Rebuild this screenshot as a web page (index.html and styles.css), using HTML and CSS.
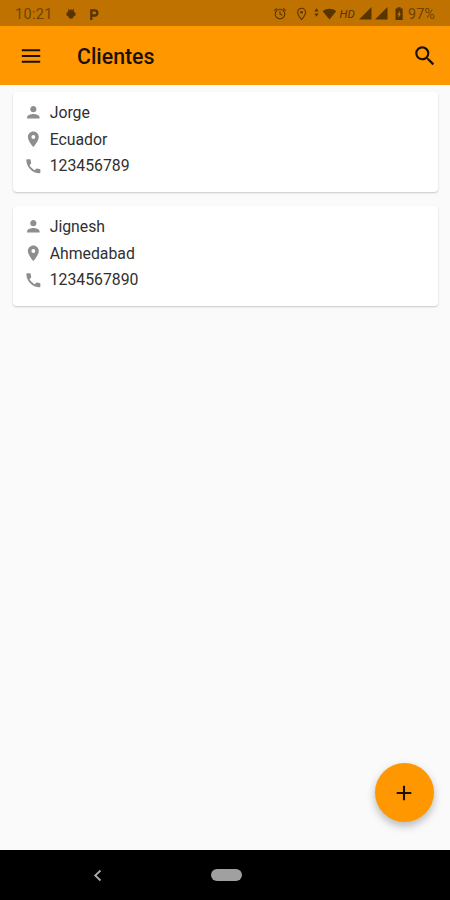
FILE: index.html
```html
<!DOCTYPE html>
<html lang="es">
<head>
<meta charset="utf-8">
<title>Clientes</title>
<link rel="stylesheet" href="styles.css">
</head>
<body>
<svg class="defs" aria-hidden="true">
  <symbol id="person" viewBox="0 0 24 24"><path d="M12 12c2.21 0 4-1.79 4-4s-1.79-4-4-4-4 1.79-4 4 1.79 4 4 4zm0 2c-2.67 0-8 1.34-8 4v2h16v-2c0-2.66-5.33-4-8-4z"/></symbol>
  <symbol id="place" viewBox="0 0 24 24"><path d="M12 2C8.13 2 5 5.13 5 9c0 5.25 7 13 7 13s7-7.75 7-13c0-3.87-3.13-7-7-7zm0 9.5a2.5 2.5 0 0 1 0-5 2.5 2.5 0 0 1 0 5z"/></symbol>
  <symbol id="phone" viewBox="0 0 24 24"><path d="M20.01 15.38c-1.23 0-2.42-.2-3.53-.56a.977.977 0 0 0-1.01.24l-1.57 1.97c-2.83-1.35-5.48-3.9-6.89-6.83l1.95-1.66c.27-.28.35-.67.24-1.02-.37-1.11-.56-2.3-.56-3.53 0-.54-.45-.99-.99-.99H4.19C3.65 3 3 3.24 3 3.99 3 13.28 10.73 21 20.01 21c.71 0 .99-.63.99-1.18v-3.45c0-.54-.45-.99-.99-.99z"/></symbol>
</svg>
<header>
  <div class="status">
    <span class="clock">10:21</span>
    <svg class="bug" width="10" height="12" viewBox="0 0 10 12"><path d="M2.300 .8l1.100 1.200a3.400 3.400 0 0 1 3.200 0L7.700 .8l.5.4-.8 1.500c.6.500.9 1.100 1 1.700h1.100v3.300H8.100A3.600 3.600 0 0 1 5 10.800 3.600 3.600 0 0 1 1.900 7.700H.5V4.400h1.100c.1-.6.400-1.200 1-1.700l-.8-1.500z"/></svg>
    <svg class="parking" width="11" height="13" viewBox="0 0 11 13"><path d="M2.300 12V2.400h3.500a2.500 2.500 0 0 1 0 5.100H2.300" fill="none" stroke="currentColor" stroke-width="2.300"/></svg>
    <svg class="icons" width="134" height="16" viewBox="0 0 134 16">
      <g fill="none" stroke="currentColor" stroke-width="1.1">
        <circle cx="7" cy="8" r="4.8"/><path d="M1.2 4.6l2.7-2.3M10.1 2.3l2.7 2.3M7 5.2V8l2.3 1.3"/>
        <path d="M28.6 13.4s-3.9-4.1-3.9-7.2a3.9 3.9 0 0 1 7.8 0c0 3.1-3.9 7.2-3.9 7.2z"/>
      </g>
      <circle cx="28.6" cy="6.3" r="1.3"/>
      <path d="M41.3 5.500l2.200-3.300 2.200 3.300zM41.300 7.500l2.200 3.300 2.200-3.300z"/>
      <path d="M49.700 5.200c4-3.200 9.500-3.200 13.500 0l-6.700 8.200z"/>
      <text x="66.500" y="11.500" class="hd">HD</text>
      <path d="M86 13.500L98.500 1v12.500zM102 13.500L114.500 1v12.500z"/>
      <path fill-rule="evenodd" d="M122.500 2.500h2V1.200h3.200v1.300h2v11.500h-7.200zm4.300 2.300l-2.600 4h1.300v3l2.500-4h-1.200z"/>
    </svg>
    <span class="battery">97%</span>
  </div>
  <div class="appbar">
    <svg class="menu" width="20" height="16" viewBox="0 0 20 16"><path d="M.8 2.200h18.400M.8 8h18.400M.8 13.800h18.400" fill="none" stroke="currentColor" stroke-width="2"/></svg>
    <h1>Clientes</h1>
    <svg class="search" width="26" height="26" viewBox="0 0 24 24"><path d="M15.500 14h-.79l-.28-.27A6.471 6.471 0 0 0 16 9.500 6.500 6.500 0 1 0 9.500 16c1.610 0 3.090-.590 4.230-1.570l.27.28v.79l5 4.990L20.490 19l-4.990-5zm-6 0C7.010 14 5 11.990 5 9.500S7.010 5 9.500 5 14 7.010 14 9.500 11.990 14 9.500 14z"/></svg>
  </div>
</header>
<main>
  <article class="card">
    <div class="row"><svg><use href="#person"/></svg><span>Jorge</span></div>
    <div class="row"><svg><use href="#place"/></svg><span>Ecuador</span></div>
    <div class="row"><svg><use href="#phone"/></svg><span>123456789</span></div>
  </article>
  <article class="card">
    <div class="row"><svg><use href="#person"/></svg><span>Jignesh</span></div>
    <div class="row"><svg><use href="#place"/></svg><span>Ahmedabad</span></div>
    <div class="row"><svg><use href="#phone"/></svg><span>1234567890</span></div>
  </article>
  <button class="fab" aria-label="Agregar"><svg width="16" height="16" viewBox="0 0 16 16"><path d="M8 .7v14.6M.7 8h14.6" fill="none" stroke="currentColor" stroke-width="2.1"/></svg></button>
</main>
<footer>
  <svg class="back" width="9" height="13" viewBox="0 0 9 13"><path d="M7.500 1.500l-5.300 5 5.300 5" fill="none" stroke="currentColor" stroke-width="1.800"/></svg>
  <span class="home"></span>
</footer>
</body>
</html>
```
FILE: styles.css
```css
* { box-sizing: border-box; }
body {
  margin: 0;
  height: 900px;
  display: flex;
  flex-direction: column;
  overflow: hidden;
  background: #fafafa;
  color: #303030;
  font-family: Roboto, sans-serif;
}
svg { display: block; flex: none; fill: currentColor; }
.defs { position: absolute; width: 0; height: 0; }
.status {
  height: 26px;
  display: flex;
  align-items: center;
  padding: 2px 13px 0 15px;
  background: #bf7200;
  color: #573400;
  font-size: 14.5px;
}
.clock { width: 51px; letter-spacing: .3px; color: #704300; }
.parking { margin-left: 13px; }
.icons { margin-left: auto; }
.hd { font-size: 11.5px; font-style: italic; font-weight: 400; }
.battery { width: 30px; padding-left: 1px; color: #704300; }
.appbar {
  height: 59px;
  display: flex;
  align-items: center;
  padding: 0 12px 0 20.5px;
  background: #ff9800;
  color: #1c1100;
}
.appbar h1 {
  margin: 2px 0 0 36.5px;
  font-size: 21.3px;
  font-weight: 500;
  line-height: 26px;
}
.search { margin-left: auto; }
main {
  flex: 1;
  display: flex;
  flex-direction: column;
  gap: 14px;
  padding: 7px 12px 0 13px;
}
.card {
  height: 100px;
  padding: 7.5px 11px;
  background: #fff;
  border-radius: 4px;
  box-shadow: 0 1px 2px rgba(0, 0, 0, .2);
}
.row {
  height: 26.6px;
  display: flex;
  align-items: center;
  gap: 7px;
  font-size: 15.8px;
}
.row svg { width: 18.7px; height: 18.7px; color: #8e8e8e; }
.fab {
  width: 59px;
  height: 59px;
  margin: auto 4.5px 28px auto;
  padding: 0;
  display: grid;
  place-items: center;
  border: 0;
  border-radius: 50%;
  background: #ff9800;
  color: #1c1100;
  box-shadow: 0 4px 8px rgba(0, 0, 0, .27);
}
footer {
  height: 50px;
  display: flex;
  align-items: center;
  padding-left: 93px;
  background: #000;
  color: #aaa;
}
.home {
  width: 31px;
  height: 12px;
  margin-left: 108.5px;
  border-radius: 6px;
  background: #a0a0a0;
}
```
